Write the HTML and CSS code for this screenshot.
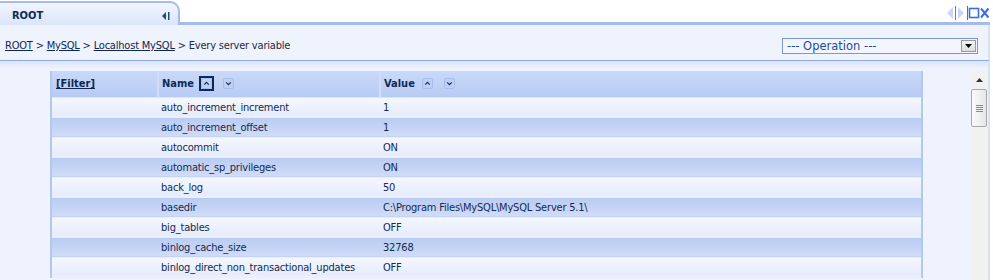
FILE: index.html
```html
<!DOCTYPE html>
<html lang="en">
<head>
  <meta charset="UTF-8" />
  <title>Every server variable</title>
  <link rel="stylesheet" href="styles.css">
</head>
<body>
  <div class="window">
    <div class="tabbar">
      <div class="tab">
        <span class="tab-title">ROOT</span>
        <svg class="tab-collapse" width="8" height="8" viewBox="0 0 8 8">
          <path d="M4 0 L0 4 L4 8 Z" fill="#24467f"/>
          <rect x="6" y="0" width="1.5" height="8" fill="#24467f"/>
        </svg>
      </div>
      <div class="tab-rule">
        <svg class="tab-tools" width="44" height="14" viewBox="0 0 44 14">
          <path d="M7 1 L1 7 L7 13 Z" fill="#c9d8f7"/>
          <rect x="9" y="0" width="1" height="14" fill="#4f7ee0"/>
          <path d="M12 1 L18 7 L12 13 Z" fill="#c9d8f7"/>
          <rect x="21" y="0" width="1" height="14" fill="#3d6fdc"/>
          <rect x="23.5" y="2.5" width="9" height="9" fill="none" stroke="#3d6fdc" stroke-width="1.6"/>
          <path d="M35 2.5 L42.5 11.5 M42.5 2.5 L35 11.5" stroke="#3d6fdc" stroke-width="2"/>
        </svg>
      </div>
    </div>

    <div class="toolbar">
      <div class="crumbs">
        <a href="#">ROOT</a> &gt; <a href="#">MySQL</a> &gt; <a href="#">Localhost MySQL</a> &gt; Every server variable
      </div>
      <div class="select">
        <span class="select-text">--- Operation ---</span>
        <span class="select-btn">
          <svg width="7" height="4" viewBox="0 0 7 4"><path d="M0 0 L7 0 L3.5 4 Z" fill="#000"/></svg>
        </span>
      </div>
    </div>

    <div class="content">
      <div class="grid-wrap">
        <table class="grid">
          <colgroup>
            <col class="col-filter">
            <col class="col-name">
            <col>
          </colgroup>
          <thead>
            <tr>
              <th><a href="#">[Filter]</a></th>
              <th>
                <span class="th-label">Name</span>
                <span class="sort sort-active">
                  <svg width="11" height="11" viewBox="0 0 11 11"><rect x="0.5" y="0.5" width="10" height="10" rx="1.5" fill="#c0d0f3" stroke="#a6bceb"/><path d="M3.2 6.6 L5.5 4.3 L7.8 6.6" fill="none" stroke="#173463" stroke-width="1.3"/></svg>
                </span>
                <span class="sort">
                  <svg width="11" height="11" viewBox="0 0 11 11"><rect x="0.5" y="0.5" width="10" height="10" rx="1.5" fill="#c0d0f3" stroke="#a6bceb"/><path d="M3.2 4.4 L5.5 6.7 L7.8 4.4" fill="none" stroke="#173463" stroke-width="1.3"/></svg>
                </span>
              </th>
              <th>
                <span class="th-label">Value</span>
                <span class="sort">
                  <svg width="11" height="11" viewBox="0 0 11 11"><rect x="0.5" y="0.5" width="10" height="10" rx="1.5" fill="#c0d0f3" stroke="#a6bceb"/><path d="M3.2 6.6 L5.5 4.3 L7.8 6.6" fill="none" stroke="#173463" stroke-width="1.3"/></svg>
                </span>
                <span class="sort">
                  <svg width="11" height="11" viewBox="0 0 11 11"><rect x="0.5" y="0.5" width="10" height="10" rx="1.5" fill="#c0d0f3" stroke="#a6bceb"/><path d="M3.2 4.4 L5.5 6.7 L7.8 4.4" fill="none" stroke="#173463" stroke-width="1.3"/></svg>
                </span>
              </th>
            </tr>
          </thead>
          <tbody>
            <tr><td></td><td>auto_increment_increment</td><td>1</td></tr>
            <tr><td></td><td>auto_increment_offset</td><td>1</td></tr>
            <tr><td></td><td>autocommit</td><td>ON</td></tr>
            <tr><td></td><td>automatic_sp_privileges</td><td>ON</td></tr>
            <tr><td></td><td>back_log</td><td>50</td></tr>
            <tr><td></td><td>basedir</td><td>C:\Program Files\MySQL\MySQL Server 5.1\</td></tr>
            <tr><td></td><td>big_tables</td><td>OFF</td></tr>
            <tr><td></td><td>binlog_cache_size</td><td>32768</td></tr>
            <tr><td></td><td>binlog_direct_non_transactional_updates</td><td>OFF</td></tr>
          </tbody>
        </table>
      </div>

      <div class="scrollbar">
        <div class="scroll-up">
          <svg width="7" height="4" viewBox="0 0 7 4"><path d="M0 4 L7 4 L3.5 0 Z" fill="#333"/></svg>
        </div>
        <div class="scroll-thumb">
          <span></span><span></span><span></span><span></span>
        </div>
      </div>
    </div>
  </div>
</body>
</html>
```

FILE: styles.css
```css
* {
  margin: 0;
  padding: 0;
  box-sizing: border-box;
}

:root {
  --navy: #0f2650;
  --tab-border: #a3bbf1;
  --panel-bg: #eff3fd;
  --grid-border: #b3c7f2;
  --row-light: linear-gradient(#f4f7fe, #e4ebfb);
  --row-dark: linear-gradient(#b9cbf3, #d0dcf8);
}

body {
  background: #fff;
  font-family: "DejaVu Sans Condensed", "Liberation Sans", sans-serif;
  font-size: 11px;
  letter-spacing: -0.2px;
  color: var(--navy);
  width: 993px;
  height: 280px;
  overflow: hidden;
}

a {
  color: var(--navy);
}

.window {
  width: 990px;
}

/* Tab bar */
.tabbar {
  display: flex;
  align-items: flex-end;
  height: 25px;
}

.tab {
  width: 180px;
  height: 24px;
  display: flex;
  align-items: center;
  justify-content: space-between;
  padding: 0 8px 0 12px;
  background: linear-gradient(#f1f5fe, #dbe5fa);
  border-top: 2px solid var(--tab-border);
  border-right: 2px solid var(--tab-border);
  border-top-right-radius: 10px;
}

.tab-title {
  font-weight: bold;
  color: #0b2a5c;
  margin-top: 3px;
  letter-spacing: 0;
}

.tab-collapse {
  margin-top: 3px;
}

.tab-rule {
  flex: 1;
  height: 25px;
  border-bottom: 3px solid var(--tab-border);
  display: flex;
  justify-content: flex-end;
  align-items: flex-start;
  padding-top: 6px;
}

/* Breadcrumb toolbar */
.toolbar {
  height: 36px;
  background: var(--panel-bg);
  border-bottom: 1px solid #8eaae6;
  border-right: 2px solid #d6e1f8;
  display: flex;
  align-items: center;
  justify-content: space-between;
  padding: 0 10px 0 5px;
}

.crumbs {
  color: #1e2a44;
  margin-top: 6px;
}

.select {
  width: 196px;
  height: 16px;
  border: 1px solid #7a98d2;
  background: #f3f6fe;
  display: flex;
  align-items: center;
  justify-content: space-between;
  padding-left: 4px;
  margin-top: 6px;
}

.select-text {
  font-family: "DejaVu Sans", sans-serif;
  font-size: 11.5px;
  letter-spacing: 0;
  color: #1f4a9c;
}

.select-btn {
  width: 15px;
  height: 12px;
  margin-right: 1px;
  background: linear-gradient(#f6f6f6, #dcdcdc);
  border: 1px solid #9a9a9a;
  display: flex;
  align-items: center;
  justify-content: center;
}

/* Content */
.content {
  height: 219px;
  display: flex;
  background: linear-gradient(#dde5f7, var(--panel-bg) 8px);
  border-right: 2px solid #d6e1f8;
  padding-top: 10px;
}

.grid-wrap {
  padding-left: 50px;
}

.grid {
  width: 873px;
  border-collapse: collapse;
  border-left: 2px solid var(--grid-border);
  border-right: 2px solid var(--grid-border);
}

.col-filter {
  width: 107px;
}

.col-name {
  width: 222px;
}

.grid th {
  height: 26px;
  text-align: left;
  font-weight: bold;
  letter-spacing: 0;
  color: #0f2a58;
  padding: 0 3px;
  background: linear-gradient(#cad9f8, #b7cbf4);
  border-left: 2px solid #d2def9;
  border-bottom: 1px solid #dde6fb;
  white-space: nowrap;
}

.grid th:first-child {
  border-left: none;
  padding-left: 4px;
}

.th-label {
  vertical-align: middle;
}

.sort {
  display: inline-flex;
  width: 15px;
  height: 15px;
  align-items: center;
  justify-content: center;
  vertical-align: middle;
  margin-left: 2px;
}

.sort + .sort {
  margin-left: 3px;
}

.sort-active {
  border: 2px solid #0b2a5a;
}

.grid td {
  height: 20px;
  padding: 0 3px;
  color: #142a50;
  white-space: nowrap;
  border-bottom: 1px solid #e8eefc;
}

.grid tbody tr:nth-child(odd) td {
  background: var(--row-light);
}

.grid tbody tr:nth-child(even) td {
  background: var(--row-dark);
}

/* Scrollbar */
.scrollbar {
  margin-left: auto;
  margin-right: 1px;
  width: 16px;
  background: #f1f1ef;
  display: flex;
  flex-direction: column;
}

.scroll-up {
  height: 17px;
  display: flex;
  align-items: center;
  justify-content: center;
}

.scroll-thumb {
  margin-top: 1px;
  height: 38px;
  border: 1px solid #a8a8a8;
  border-radius: 2px;
  background: linear-gradient(90deg, #fafafa, #e6e6e6);
  display: flex;
  flex-direction: column;
  align-items: center;
  justify-content: center;
  gap: 1px;
}

.scroll-thumb span {
  width: 7px;
  height: 1px;
  background: #8a8a8a;
}
```
